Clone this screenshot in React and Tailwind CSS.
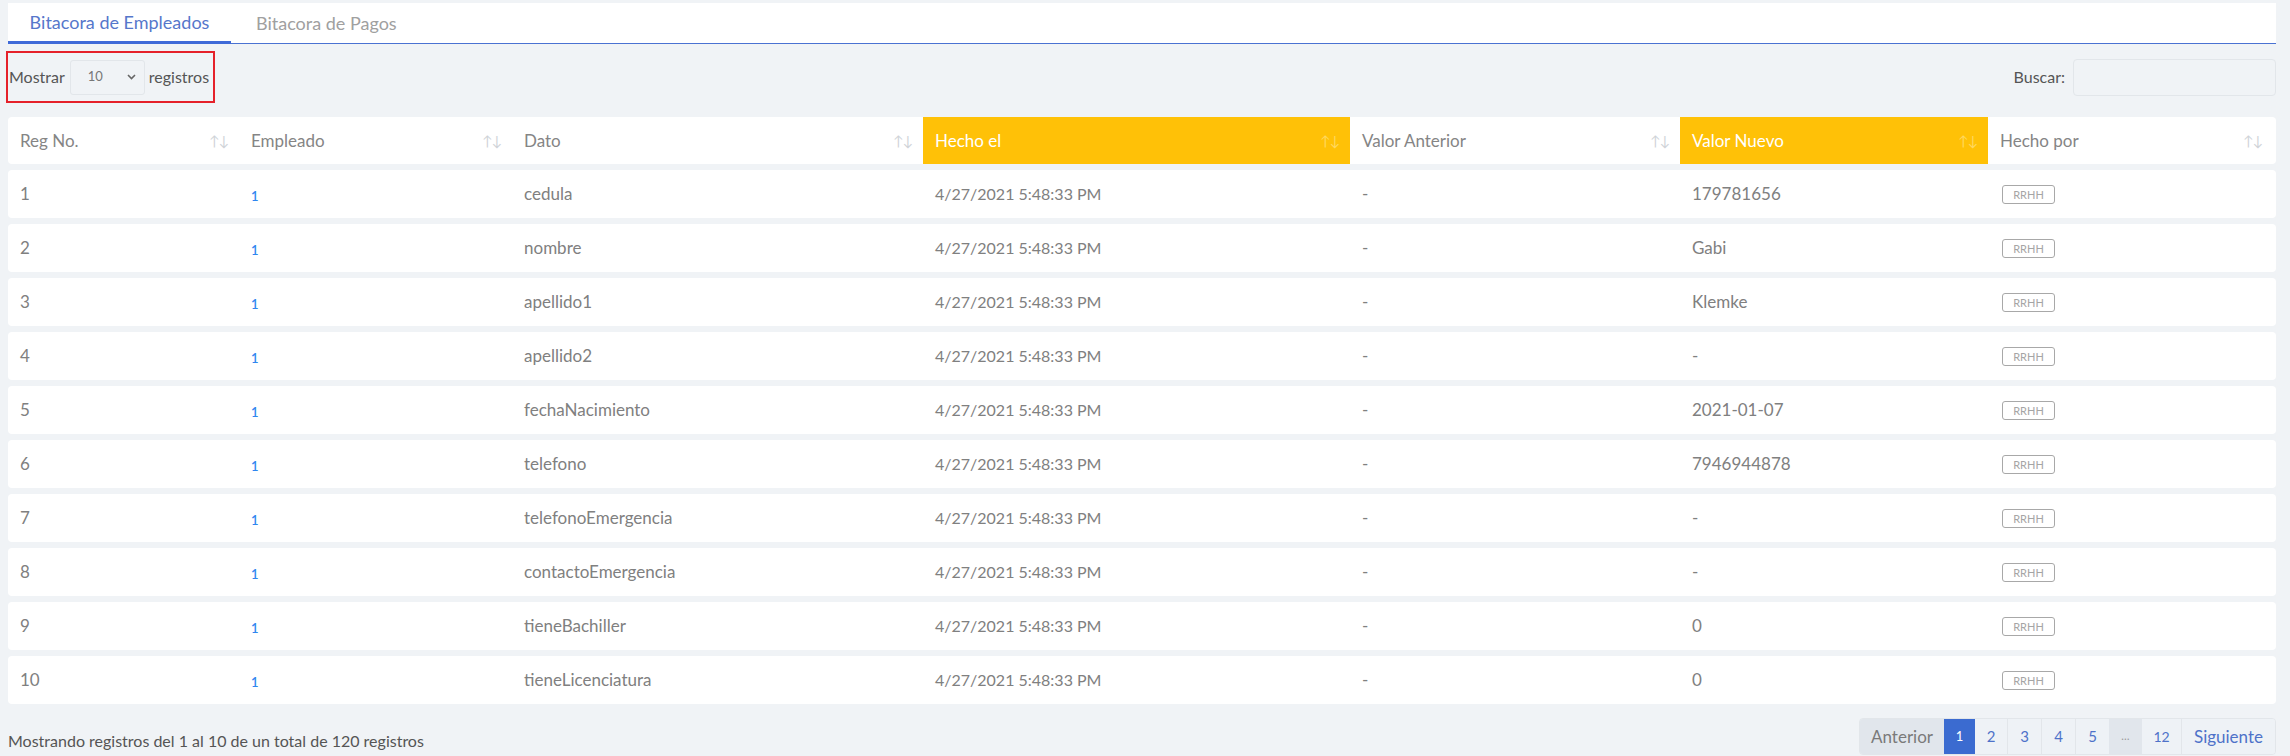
import React from 'react';

const rows = [
  ['1', 'cedula', '179781656'],
  ['2', 'nombre', 'Gabi'],
  ['3', 'apellido1', 'Klemke'],
  ['4', 'apellido2', '-'],
  ['5', 'fechaNacimiento', '2021-01-07'],
  ['6', 'telefono', '7946944878'],
  ['7', 'telefonoEmergencia', '-'],
  ['8', 'contactoEmergencia', '-'],
  ['9', 'tieneBachiller', '0'],
  ['10', 'tieneLicenciatura', '0'],
];

const cols = 'grid grid-cols-[231px_273px_411px_427px_330px_308px_285px]';

function SortIcon({ light }) {
  return (
    <span className={`absolute right-[10px] top-1/2 -translate-y-1/2 flex text-[14px] leading-none ${light ? 'text-[#ffd85e]' : 'text-[#cfd3d8]'}`}>
      <span>↑</span>
      <span className="-ml-[1px]">↓</span>
    </span>
  );
}

function HeadCell({ label, yellow, first, last }) {
  return (
    <div
      className={`relative flex items-center pl-[12px] ${yellow ? 'bg-[#ffc107] text-white' : 'text-[#858585]'} ${first ? 'rounded-l-[4px]' : ''} ${last ? 'rounded-r-[4px]' : ''}`}
    >
      {label}
      <SortIcon light={yellow} />
    </div>
  );
}

export default function App() {
  return (
    <div className="min-h-[756px] bg-[#f0f3f6] pt-[3px] pl-[8px] pr-[14px] font-['Lato','Open_Sans',sans-serif] text-[17px]">
      {/* tabs */}
      <div className="flex h-[41px] bg-white border-b border-[#4a72d2]">
        <div className="flex items-center justify-center w-[223px] border-b-[3px] border-[#3f6ad8] text-[18px] text-[#5677cb] -mb-[1px]">
          Bitacora de Empleados
        </div>
        <div className="flex items-center px-[25px] text-[18px] text-[#a0a0a0]">Bitacora de Pagos</div>
      </div>

      {/* controls */}
      <div className="flex items-center justify-between mt-[7px] h-[52px] text-[16px]">
        <div className="flex items-center h-[52px] border-2 border-[#e5212a] -ml-[2px] pl-[1px] pr-[4px] text-[#555]">
          <span>Mostrar</span>
          <div className="flex items-center justify-between ml-[5px] mr-[4px] w-[75px] h-[35px] border border-[#e2e6ea] rounded-[3px] pl-[17px] pr-[8px] text-[13px] text-[#777]">
            <span>10</span>
            <svg width="9" height="6" viewBox="0 0 9 6" fill="none" stroke="#666" strokeWidth="1.6">
              <path d="M1 1l3.5 3.5L8 1" />
            </svg>
          </div>
          <span>registros</span>
        </div>
        <div className="flex items-center text-[#555]">
          <span className="mr-[8px]">Buscar:</span>
          <div className="w-[203px] h-[37px] border border-[#e2e6ea] rounded-[4px] bg-[#f0f3f6]" />
        </div>
      </div>

      {/* table */}
      <div className="flex flex-col gap-[6px] mt-[14px]">
        <div className={`${cols} h-[47px] bg-white rounded-[4px]`}>
          <HeadCell label="Reg No." first />
          <HeadCell label="Empleado" />
          <HeadCell label="Dato" />
          <HeadCell label="Hecho el" yellow />
          <HeadCell label="Valor Anterior" />
          <HeadCell label="Valor Nuevo" yellow />
          <HeadCell label="Hecho por" last />
        </div>
        {rows.map(([n, dato, nuevo]) => (
          <div key={n} className={`${cols} h-[48px] bg-white rounded-[4px] text-[#808080]`}>
            <div className="flex items-center pl-[12px]">{n}</div>
            <div className="flex items-center pl-[12px] pt-[5px] text-[13px] font-semibold text-[#2f86ef]">1</div>
            <div className="flex items-center pl-[12px]">{dato}</div>
            <div className="flex items-center pl-[12px] text-[16px]">4/27/2021 5:48:33 PM</div>
            <div className="flex items-center pl-[12px]">-</div>
            <div className="flex items-center pl-[12px]">{nuevo}</div>
            <div className="flex items-center pl-[14px]">
              <span className="flex items-center justify-center w-[53px] h-[19px] border border-[#a8a8a8] rounded-[3px] text-[11px] text-[#a5a5a5] leading-none">
                RRHH
              </span>
            </div>
          </div>
        ))}
      </div>

      {/* footer */}
      <div className="flex items-center justify-between mt-[14px]">
        <div className="pt-[8px] text-[16px] text-[#555]">Mostrando registros del 1 al 10 de un total de 120 registros</div>
        <div className="flex h-[37px] border border-[#e2e6ea] rounded-[4px] overflow-hidden text-[15px]">
          <div className="flex items-center justify-center w-[84px] bg-[#e1e6ec] text-[#7a7a7a] text-[17px]">Anterior</div>
          <div className="flex items-center justify-center w-[31px] bg-[#3b6bd0] text-white text-[13px]">1</div>
          <div className="flex items-center justify-center w-[33px] bg-[#eef2f6] text-[#4e72c9] border-r border-[#e2e6ea]">2</div>
          <div className="flex items-center justify-center w-[34px] bg-[#eef2f6] text-[#4e72c9] border-r border-[#e2e6ea]">3</div>
          <div className="flex items-center justify-center w-[34px] bg-[#eef2f6] text-[#4e72c9] border-r border-[#e2e6ea]">4</div>
          <div className="flex items-center justify-center w-[33px] bg-[#eef2f6] text-[#4e72c9]">5</div>
          <div className="flex items-center justify-center w-[33px] bg-[#e1e6ec] text-[#999] text-[11px]">…</div>
          <div className="flex items-center justify-center w-[40px] bg-[#eef2f6] text-[#4e72c9] text-[14px] border-r border-[#e2e6ea]">12</div>
          <div className="flex items-center justify-center w-[93px] bg-[#eef2f6] text-[#4e72c9] text-[17px]">Siguiente</div>
        </div>
      </div>
    </div>
  );
}
